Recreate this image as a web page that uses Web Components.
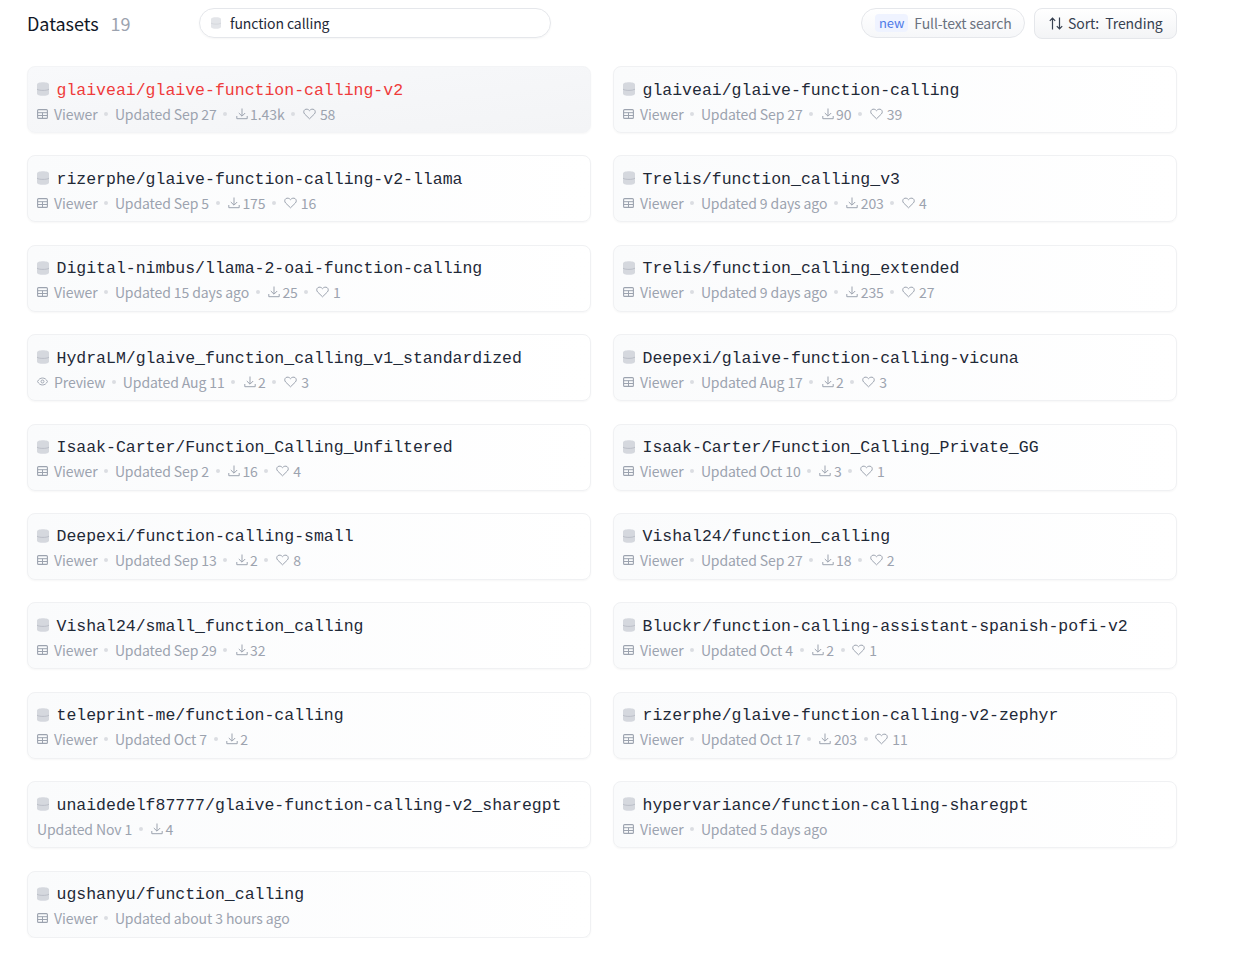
<!DOCTYPE html>
<html><head><meta charset="utf-8"><title>Datasets</title>
<style>
html,body{margin:0;background:#fff}
body{font-family:"Noto Sans CJK SC","Noto Sans",sans-serif;padding:8px 57px 0 27px;color:#111827}
</style></head><body>
<ds-header count="19" query="function calling"></ds-header>
<ds-grid id="g"></ds-grid>
<script>
const ICON={
db:'<svg width="12" height="14" viewBox="0 0 12 14"><path d="M0 2.6C0 1 2.7.2 6 .2s6 .8 6 2.4v8.8c0 1.6-2.7 2.4-6 2.4s-6-.8-6-2.4z" fill="#d5d8de"/><path d="M0 7.2c1.5.9 3.6 1.2 6 1.2s4.500-.3 6-1.200" fill="none" stroke="#b4b8c1" stroke-width=".8"/></svg>',
viewer:'<svg width="11" height="10" viewBox="0 0 11 10"><rect x=".6" y=".6" width="9.800" height="8.800" rx="1" fill="none" stroke="#9ca3af" stroke-width="1.100"/><path d="M.6 3.700h9.800M5.500 3.700v5.700M.6 6.500h9.800" stroke="#9ca3af" stroke-width="1"/></svg>',
eye:'<svg width="11" height="9" viewBox="0 0 12 9"><path d="M.6 4.500C1.800 2 3.700.7 6 .7s4.200 1.300 5.400 3.800C10.200 7 8.300 8.300 6 8.300S1.800 7 .6 4.500z" fill="none" stroke="#9ca3af" stroke-width="1"/><circle cx="6" cy="4.500" r="1.600" fill="none" stroke="#9ca3af" stroke-width="1"/></svg>',
dl:'<svg width="12" height="12" viewBox="0 0 12 12"><path d="M6 .5v7.500M2.800 5 6 8.200 9.200 5M.8 8v2.700h10.400V8" fill="none" stroke="#9ca3af" stroke-width="1"/></svg>',
heart:'<svg width="13" height="12" viewBox="0 0 13 12"><path d="M6.500 10.800 1.700 6.100C.3 4.700.5 2.700 1.800 1.700 3.200.7 5.200 1 6.500 2.700 7.800 1 9.800.7 11.200 1.700c1.300 1 1.500 3 .1 4.400z" fill="none" stroke="#9ca3af" stroke-width="1"/></svg>'
};
class DsHeader extends HTMLElement{constructor(){super();this.attachShadow({mode:'open'})}
connectedCallback(){this.shadowRoot.innerHTML=`<style>
:host{display:flex;align-items:center;height:30px;font-size:14px;letter-spacing:-.1px;line-height:1}
h1{margin:0;font-weight:400;font-size:18px;letter-spacing:-.05px;color:#111827}
.n{margin-left:12px;font-size:18px;letter-spacing:-.1px;color:#9ca3af}
.left{display:flex;align-items:center;width:172px}
.search{box-sizing:border-box;width:352px;height:30px;border:1px solid #e5e7eb;border-radius:15px;display:flex;align-items:center;padding-left:11px;gap:9px;box-shadow:0 1px 2px rgba(0,0,0,.04)}
.search svg{opacity:.65;width:10px;height:12px}
.q{color:#1f2937}
.sp{flex:1}
.ft{box-sizing:border-box;height:30px;width:164px;border:1px solid #e5e7eb;border-radius:15px;display:flex;align-items:center;padding-left:13px;gap:6px;color:#6b7280;background:linear-gradient(to top,#f6f7f9,#fff);margin-right:9px}
.new{background:#eff3ff;color:#4f7be8;border-radius:4px;font-size:13px;padding:2px 4px 3px}
.sort{box-sizing:border-box;height:31px;width:143px;border:1px solid #e5e7eb;border-radius:8px;display:flex;align-items:center;padding-left:14px;gap:5px;color:#374151;background:linear-gradient(to top,#f3f4f6,#fff)}
</style>
<div class="left"><h1>Datasets</h1><span class="n">${this.getAttribute('count')}</span></div>
<div class="search">${ICON.db}<span class="q">${this.getAttribute('query')}</span></div>
<div class="sp"></div>
<div class="ft"><span class="new">new</span><span>Full-text search</span></div>
<div class="sort"><svg width="14" height="13" viewBox="0 0 14 13"><path d="M3.500 12.500V1M.8 3.800 3.500 1l2.700 2.800M10.500.5V12M7.800 9.200 10.500 12l2.700-2.800" fill="none" stroke="#374151" stroke-width="1.200"/></svg><span>Sort:&nbsp; Trending</span></div>`}}
class DsGrid extends HTMLElement{constructor(){super();this.attachShadow({mode:'open'}).innerHTML=`<style>
:host{display:grid;grid-template-columns:564px 564px;column-gap:22px;row-gap:22.400px;margin-top:28px}
</style><slot></slot>`}}
class DsCard extends HTMLElement{constructor(){super();this.attachShadow({mode:'open'})}
connectedCallback(){const a=n=>this.getAttribute(n);const sep='<i class="dot"></i>';
const parts=[];
if(a('mode'))parts.push(`<span class="g">${a('mode')==='Preview'?ICON.eye:ICON.viewer}<span>${a('mode')}</span></span>`);
parts.push(`<span>Updated ${a('up')}</span>`);
if(a('dl'))parts.push(`<span class="g d">${ICON.dl}<span>${a('dl')}</span></span>`);
if(a('likes'))parts.push(`<span class="g h">${ICON.heart}<span>${a('likes')}</span></span>`);
this.shadowRoot.innerHTML=`<style>
:host{display:block;box-sizing:border-box;height:67px;border:1px solid #f0f1f3;border-radius:8px;padding:11.500px 9px 0;background:linear-gradient(to right,#fafbfc,#fff);box-shadow:0 1px 2px rgba(0,0,0,.035)}
:host([active]){background:linear-gradient(to bottom right,#f8f9fb,#f3f4f6);border-color:#f3f4f6}
.t{display:flex;align-items:center;gap:7.500px;height:24px;font:16.500px/24px "Liberation Mono",monospace;color:#1f2937;white-space:nowrap}
.t svg{margin-top:-3px}
:host([active]) .t{color:#ef3b3b}
.m{display:flex;align-items:center;height:20px;margin-top:1px;font-size:14px;letter-spacing:-.1px;color:#9ca3af;white-space:nowrap}
.g{display:inline-flex;align-items:center;gap:6px}.d{gap:2.500px;margin-left:1.500px}.h{gap:4px;margin-left:1px}
.dot{width:4px;height:4px;border-radius:50%;background:#dbdde2;margin:0 6.700px}
svg{flex:none}
</style><div class="t">${ICON.db}<span>${a('name')}</span></div><div class="m">${parts.join(sep)}</div>`}}
customElements.define('ds-header',DsHeader);customElements.define('ds-grid',DsGrid);customElements.define('ds-card',DsCard);
const rows=[
['glaiveai/glaive-function-calling-v2','Viewer','Sep 27','1.43k','58',1],
['glaiveai/glaive-function-calling','Viewer','Sep 27','90','39'],
['rizerphe/glaive-function-calling-v2-llama','Viewer','Sep 5','175','16'],
['Trelis/function_calling_v3','Viewer','9 days ago','203','4'],
['Digital-nimbus/llama-2-oai-function-calling','Viewer','15 days ago','25','1'],
['Trelis/function_calling_extended','Viewer','9 days ago','235','27'],
['HydraLM/glaive_function_calling_v1_standardized','Preview','Aug 11','2','3'],
['Deepexi/glaive-function-calling-vicuna','Viewer','Aug 17','2','3'],
['Isaak-Carter/Function_Calling_Unfiltered','Viewer','Sep 2','16','4'],
['Isaak-Carter/Function_Calling_Private_GG','Viewer','Oct 10','3','1'],
['Deepexi/function-calling-small','Viewer','Sep 13','2','8'],
['Vishal24/function_calling','Viewer','Sep 27','18','2'],
['Vishal24/small_function_calling','Viewer','Sep 29','32',''],
['Bluckr/function-calling-assistant-spanish-pofi-v2','Viewer','Oct 4','2','1'],
['teleprint-me/function-calling','Viewer','Oct 7','2',''],
['rizerphe/glaive-function-calling-v2-zephyr','Viewer','Oct 17','203','11'],
['unaidedelf87777/glaive-function-calling-v2_sharegpt','','Nov 1','4',''],
['hypervariance/function-calling-sharegpt','Viewer','5 days ago','',''],
['ugshanyu/function_calling','Viewer','about 3 hours ago','','']];
const g=document.getElementById('g');
for(const r of rows){const c=document.createElement('ds-card');c.setAttribute('name',r[0]);if(r[1])c.setAttribute('mode',r[1]);c.setAttribute('up',r[2]);if(r[3])c.setAttribute('dl',r[3]);if(r[4])c.setAttribute('likes',r[4]);if(r[5])c.setAttribute('active','');g.appendChild(c)}
</script></body></html>
